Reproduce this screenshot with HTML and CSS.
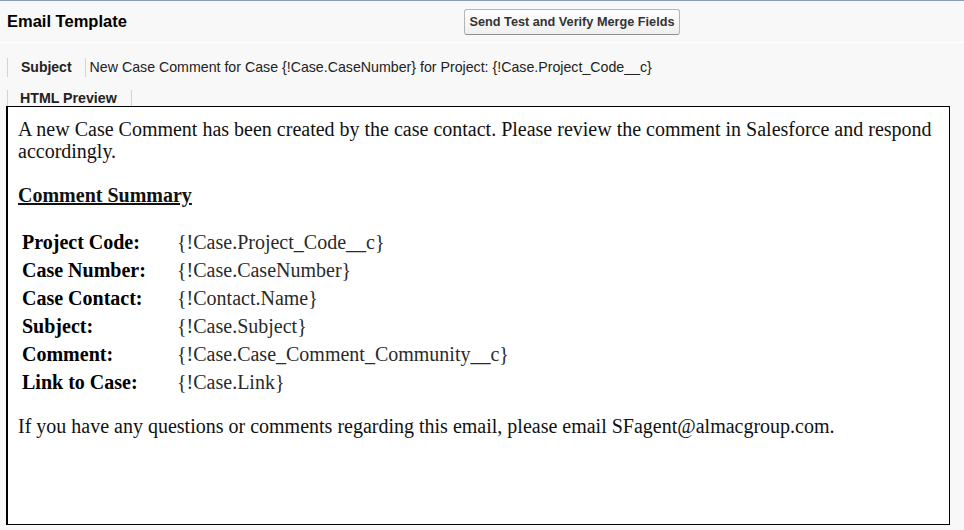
FILE: index.html
```html
<!DOCTYPE html>
<html>
<head>
<meta charset="utf-8">
<link rel="stylesheet" href="styles.css">
</head>
<body>
<div class="page">
  <div class="topbar">
    <h2 class="title">Email Template</h2>
    <button class="btn" type="button">Send Test and Verify Merge Fields</button>
  </div>
  <div class="field-row">
    <span class="field-label">Subject</span>
    <span class="field-value">New Case Comment for Case {!Case.CaseNumber} for Project: {!Case.Project_Code__c}</span>
  </div>
  <div class="preview-tab">
    <span class="field-label tab-label">HTML Preview</span>
  </div>
  <div class="preview-box">
    <p class="para">A new Case Comment has been created by the case contact. Please review the comment in Salesforce and respond accordingly.</p>
    <p class="para heading">Comment Summary</p>
    <table class="summary">
      <tr><td class="k">Project Code:</td><td class="v">{!Case.Project_Code__c}</td></tr>
      <tr><td class="k">Case Number:</td><td class="v">{!Case.CaseNumber}</td></tr>
      <tr><td class="k">Case Contact:</td><td class="v">{!Contact.Name}</td></tr>
      <tr><td class="k">Subject:</td><td class="v">{!Case.Subject}</td></tr>
      <tr><td class="k">Comment:</td><td class="v">{!Case.Case_Comment_Community__c}</td></tr>
      <tr><td class="k">Link to Case:</td><td class="v">{!Case.Link}</td></tr>
    </table>
    <p class="para">If you have any questions or comments regarding this email, please email SFagent@almacgroup.com.</p>
  </div>
</div>
</body>
</html>
```

FILE: styles.css
```css
html, body {
  margin: 0;
  padding: 0;
  background: #f8f8f8;
}
.page {
  width: 964px;
  height: 530px;
  font-family: "Liberation Sans", Arial, sans-serif;
  color: #000;
  overflow: hidden;
}
.topbar {
  display: flex;
  align-items: center;
  height: 41px;
  border-top: 1px solid #8a9dbe;
  border-bottom: 1px solid #ffffff;
  box-sizing: content-box;
}
.title {
  margin: 0 0 0 7px;
  font-size: 16.5px;
  font-weight: bold;
  color: #000;
  width: 457px;
}
.btn {
  height: 26px;
  width: 216px;
  padding: 0 2px;
  font-family: "Liberation Sans", Arial, sans-serif;
  font-size: 12.7px;
  font-weight: bold;
  color: #333;
  background: linear-gradient(#ffffff, #efefef);
  border: 1px solid #b5b5b5;
  border-bottom-color: #8f8f8f;
  border-radius: 3px;
  margin-top: 1px;
  white-space: nowrap;
}
.field-row {
  display: flex;
  align-items: center;
  margin: 15px 0 0 7px;
  height: 19px;
  border-left: 1px solid #d4d4d4;
}
.field-label {
  font-size: 14px;
  font-weight: bold;
  color: #222;
  padding: 0 13px 0 13px;
  border-right: 1px solid #d4d4d4;
  height: 19px;
  line-height: 19px;
}
.field-value {
  font-size: 14.2px;
  color: #222;
  padding-left: 4px;
  line-height: 19px;
}
.preview-tab {
  display: flex;
  margin: 13px 0 0 7px;
  height: 16px;
  border-left: 1px solid #d4d4d4;
}
.tab-label {
  height: 16px;
  line-height: 16px;
  padding: 0 14px 0 12px;
  font-size: 14.2px;
}
.preview-box {
  margin-left: 6px;
  width: 944px;
  height: 419px;
  box-sizing: border-box;
  background: #fff;
  border: 1px solid #000;
  border-left-width: 2px;
  padding: 11px 8px 0 10px;
  font-family: "Liberation Serif", "Times New Roman", serif;
  font-size: 20px;
  line-height: 22px;
  color: #111;
}
.para {
  margin: 0 0 22px 0;
}
.heading {
  font-weight: bold;
  text-decoration: underline;
  margin-bottom: 21px;
}
.summary {
  border-spacing: 2px;
  margin: 0 0 18px 0;
  font-size: 20px;
}
.summary td {
  padding: 2px;
  line-height: 22px;
  vertical-align: middle;
}
.k {
  width: 149px;
  font-weight: bold;
  color: #000;
}
.v {
  color: #2a2a2a;
}
```
